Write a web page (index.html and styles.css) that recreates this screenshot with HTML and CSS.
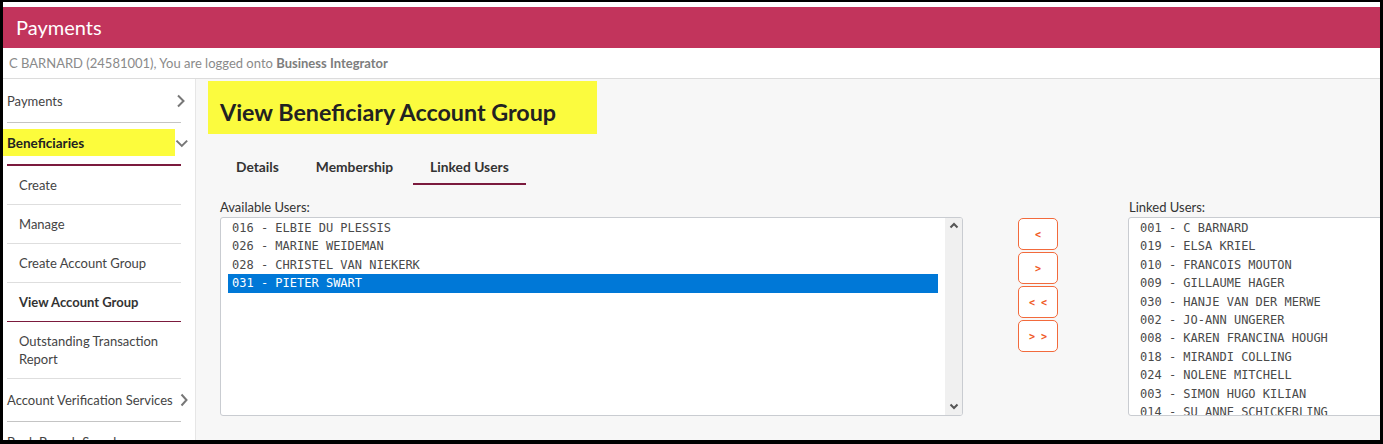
FILE: index.html
```html
<!DOCTYPE html>
<html lang="en">
<head>
<meta charset="utf-8">
<title>Payments</title>
<link rel="stylesheet" href="styles.css">
</head>
<body>
<div class="frame">
  <header class="topbar">Payments</header>
  <div class="userbar">C BARNARD (24581001), You are logged onto <b>Business Integrator</b></div>
  <div class="layout">
    <nav class="sidebar">
      <div class="menu-item">
        <span>Payments</span>
        <svg class="chev" width="10" height="14" viewBox="0 0 10 14"><polyline points="2,1.5 7.5,7 2,12.5" fill="none" stroke="#777" stroke-width="2"/></svg>
      </div>
      <div class="menu-item open">
        <span class="hl">Beneficiaries</span>
        <svg class="chev down" width="14" height="9" viewBox="0 0 14 9"><polyline points="1.5,1.5 7,7 12.5,1.5" fill="none" stroke="#777" stroke-width="2"/></svg>
      </div>
      <div class="sub">Create</div>
      <div class="sub">Manage</div>
      <div class="sub">Create Account Group</div>
      <div class="sub active">View Account Group</div>
      <div class="sub">Outstanding Transaction<br>Report</div>
      <div class="menu-item avs">
        <span>Account Verification Services</span>
        <svg class="chev" width="8" height="14" viewBox="0 0 8 14"><polyline points="1.5,1.5 6.5,7 1.5,12.5" fill="none" stroke="#777" stroke-width="2"/></svg>
      </div>
      <div class="menu-item last"><span>Bank Branch Search</span></div>
    </nav>
    <main class="content">
      <h1 class="title">View Beneficiary Account Group</h1>
      <div class="tabs">
        <div class="tab">Details</div>
        <div class="tab">Membership</div>
        <div class="tab current">Linked Users</div>
      </div>
      <div class="pickers">
        <div class="col col-left">
          <div class="label">Available Users:</div>
          <div class="listbox">
            <div class="options">
              <div class="opt">016 - ELBIE DU PLESSIS</div>
              <div class="opt">026 - MARINE WEIDEMAN</div>
              <div class="opt">028 - CHRISTEL VAN NIEKERK</div>
              <div class="opt sel">031 - PIETER SWART</div>
            </div>
            <div class="scrollbar">
              <svg width="10" height="7" viewBox="0 0 10 7"><polyline points="1.5,5.5 5,2 8.5,5.5" fill="none" stroke="#555" stroke-width="2"/></svg>
              <svg width="10" height="7" viewBox="0 0 10 7"><polyline points="1.5,1.5 5,5 8.5,1.5" fill="none" stroke="#555" stroke-width="2"/></svg>
            </div>
          </div>
        </div>
        <div class="buttons">
          <button class="mv">&lt;</button>
          <button class="mv">&gt;</button>
          <button class="mv">&lt; &lt;</button>
          <button class="mv">&gt; &gt;</button>
        </div>
        <div class="col col-right">
          <div class="label">Linked Users:</div>
          <div class="listbox right">
            <div class="options">
              <div class="opt">001 - C BARNARD</div>
              <div class="opt">019 - ELSA KRIEL</div>
              <div class="opt">010 - FRANCOIS MOUTON</div>
              <div class="opt">009 - GILLAUME HAGER</div>
              <div class="opt">030 - HANJE VAN DER MERWE</div>
              <div class="opt">002 - JO-ANN UNGERER</div>
              <div class="opt">008 - KAREN FRANCINA HOUGH</div>
              <div class="opt">018 - MIRANDI COLLING</div>
              <div class="opt">024 - NOLENE MITCHELL</div>
              <div class="opt">003 - SIMON HUGO KILIAN</div>
              <div class="opt">014 - SU ANNE SCHICKERLING</div>
              <div class="opt">021 - WILLEM BOTHA</div>
            </div>
          </div>
        </div>
      </div>
    </main>
  </div>
</div>
</body>
</html>
```

FILE: styles.css
```css
html, body {
  margin: 0;
  padding: 0;
  background: #000;
}
body {
  font-family: Lato, "Open Sans", "Liberation Sans", sans-serif;
  font-size: 13px;
  color: #444;
}
.frame {
  margin: 2px 3px 0 3px;
  height: 438px;
  background: #fff;
  overflow: hidden;
  padding-top: 5px;
  box-sizing: border-box;
}
.topbar {
  height: 41px;
  background: #c2345c;
  color: #fff;
  font-size: 20px;
  line-height: 41px;
  padding-left: 13px;
}
.userbar {
  height: 30px;
  line-height: 30px;
  padding-left: 6px;
  color: #8a8a8a;
  font-size: 13px;
  border-bottom: 1px solid #dcdcdc;
}
.userbar b {
  color: #7d7d7d;
}
.layout {
  display: flex;
  height: 400px;
}
.sidebar {
  flex: none;
  width: 193px;
  background: #fff;
  border-right: 1px solid #e6e6e6;
  padding: 0 14px 0 4px;
  box-sizing: border-box;
}
.menu-item {
  display: flex;
  align-items: center;
  justify-content: space-between;
  padding: 13px 0 12px 0;
  line-height: 18px;
  border-bottom: 1px solid #c4c4c4;
  color: #444;
}
.menu-item .chev {
  margin-right: -5px;
}
.menu-item.open {
  padding: 6px 0 8px 0;
  border-bottom: 2px solid #7b1a3d;
}
.menu-item .hl {
  display: block;
  margin-left: -4px;
  padding: 2px 0 0 4px;
  width: 173px;
  height: 25px;
  line-height: 25px;
  background: #fcfc3c;
  font-weight: bold;
  font-size: 13.5px;
  color: #222;
}
.menu-item .chev.down {
  margin-right: -8px;
  margin-top: 2px;
}
.menu-item.avs {
  padding: 12px 0 12px 0;
}
.menu-item.avs .chev {
  margin-right: -7px;
}
.menu-item.last {
  padding-top: 11px;
}
.sub {
  padding: 10px 0 10px 12px;
  line-height: 18px;
  border-bottom: 1px solid #dedede;
  color: #444;
}
.sub.active {
  font-weight: bold;
  color: #333;
  border-bottom: 1px solid #7b1a3d;
}
.content {
  flex: 1;
  min-width: 0;
  background: #f7f7f7;
  overflow: hidden;
}
.title {
  margin: 2px 0 0 12px;
  width: 389px;
  height: 53px;
  box-sizing: border-box;
  padding: 0 0 0 12px;
  background: #fbfb3e;
  font-size: 23.3px;
  line-height: 63px;
  font-weight: bold;
  color: #222;
}
.tabs {
  display: flex;
  gap: 3px;
  margin: 15px 0 0 23px;
}
.tab {
  padding: 9px 17px 8px 17px;
  line-height: 17px;
  font-size: 13.8px;
  font-weight: bold;
  color: #333;
  border-bottom: 2px solid transparent;
}
.tab.current {
  border-bottom-color: #7b1a3d;
}
.pickers {
  display: flex;
  margin: 14px 0 0 24px;
}
.col-left {
  width: 743px;
  flex: none;
}
.col-right {
  width: 262px;
  flex: none;
  margin-left: 70px;
}
.label {
  line-height: 17px;
  color: #333;
  margin-bottom: 1px;
}
.col-right .label {
  padding-left: 1px;
}
.listbox {
  display: flex;
  height: 199px;
  box-sizing: border-box;
  background: #fff;
  border: 1px solid #c9ccd1;
  border-radius: 3px;
  overflow: hidden;
}
.options {
  flex: 1;
  padding: 1px 7px 0 7px;
  font-family: "DejaVu Sans Mono", "Liberation Mono", monospace;
  font-size: 12px;
  color: #4a4a4a;
  overflow: hidden;
}
.opt {
  height: 18.4px;
  line-height: 18.4px;
  padding-left: 4px;
  white-space: nowrap;
}
.opt.sel {
  background: #0078d7;
  color: #fff;
}
.scrollbar {
  width: 17px;
  flex: none;
  background: #f0f0f0;
  display: flex;
  flex-direction: column;
  justify-content: space-between;
  align-items: center;
  padding: 4px 0 5px 0;
  box-sizing: border-box;
}
.buttons {
  display: flex;
  flex-direction: column;
  gap: 2px;
  margin: 19px 0 0 55px;
  width: 40px;
  flex: none;
}
.mv {
  width: 40px;
  height: 32px;
  padding: 0;
  background: #fff;
  border: 1px solid #f26a3c;
  border-radius: 5px;
  color: #f05a24;
  font-family: "DejaVu Sans Mono", monospace;
  font-size: 10px;
  font-weight: bold;
}
```
